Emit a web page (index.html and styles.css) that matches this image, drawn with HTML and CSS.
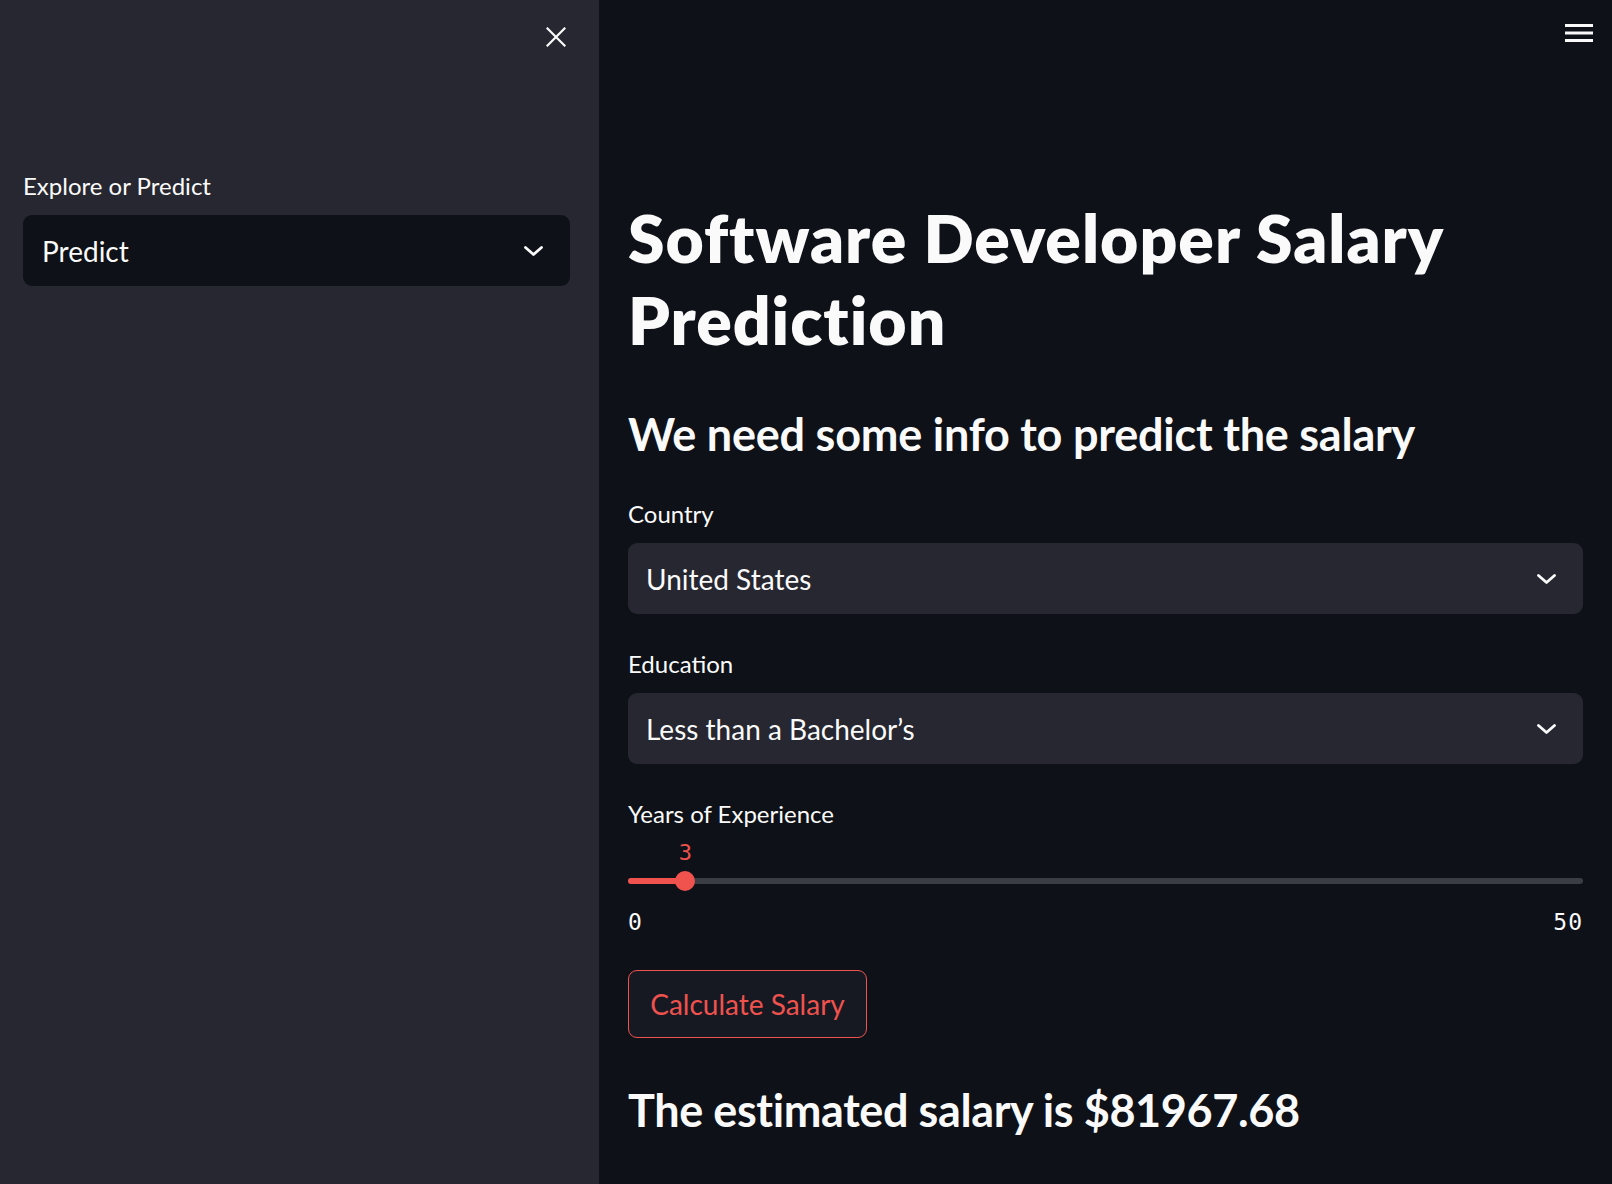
FILE: index.html
```html
<!DOCTYPE html>
<html lang="en">
<head>
<meta charset="utf-8">
<title>Software Developer Salary Prediction</title>
<link rel="stylesheet" href="styles.css">
</head>
<body>
<div class="app">
  <aside class="sidebar">
    <div class="sidebar-top">
      <svg class="close-icon" width="20" height="20" viewBox="0 0 20 20" aria-hidden="true">
        <path d="M1.5 1.5 L18.5 18.5 M18.5 1.5 L1.5 18.5" stroke="#fafafa" stroke-width="2.2" stroke-linecap="square" fill="none"/>
      </svg>
    </div>
    <div class="sidebar-field">
      <div class="field-label">Explore or Predict</div>
      <div class="select select-dark">
        <span class="select-value">Predict</span>
        <svg class="chevron" width="19" height="10" viewBox="0 0 19 10" aria-hidden="true">
          <path d="M1.5 1.5 L9.5 8.5 L17.5 1.5" stroke="#fafafa" stroke-width="2.8" stroke-linecap="round" stroke-linejoin="round" fill="none"/>
        </svg>
      </div>
    </div>
  </aside>
  <main class="main">
    <header class="topbar">
      <svg class="menu-icon" width="28" height="18" viewBox="0 0 28 18" aria-hidden="true">
        <rect x="0" y="0" width="28" height="3" fill="#fafafa"/>
        <rect x="0" y="7.5" width="28" height="3" fill="#fafafa"/>
        <rect x="0" y="15" width="28" height="3" fill="#fafafa"/>
      </svg>
    </header>
    <section class="content">
      <h1 class="title">Software Developer Salary Prediction</h1>
      <h3 class="subtitle">We need some info to predict the salary</h3>

      <div class="field">
        <div class="field-label">Country</div>
        <div class="select">
          <span class="select-value">United States</span>
          <svg class="chevron" width="19" height="10" viewBox="0 0 19 10" aria-hidden="true">
            <path d="M1.5 1.5 L9.5 8.5 L17.5 1.5" stroke="#fafafa" stroke-width="2.8" stroke-linecap="round" stroke-linejoin="round" fill="none"/>
          </svg>
        </div>
      </div>

      <div class="field">
        <div class="field-label">Education</div>
        <div class="select">
          <span class="select-value">Less than a Bachelor’s</span>
          <svg class="chevron" width="19" height="10" viewBox="0 0 19 10" aria-hidden="true">
            <path d="M1.5 1.5 L9.5 8.5 L17.5 1.5" stroke="#fafafa" stroke-width="2.8" stroke-linecap="round" stroke-linejoin="round" fill="none"/>
          </svg>
        </div>
      </div>

      <div class="field">
        <div class="field-label">Years of Experience</div>
        <div class="slider">
          <div class="slider-value-row">
            <span class="slider-value" style="left:6%">3</span>
          </div>
          <div class="slider-track-area">
            <div class="slider-track">
              <div class="slider-fill" style="width:6%"></div>
            </div>
            <div class="slider-thumb" style="left:6%"></div>
          </div>
          <div class="slider-ticks">
            <span>0</span>
            <span>50</span>
          </div>
        </div>
      </div>

      <button class="btn" type="button">Calculate Salary</button>

      <h3 class="result">The estimated salary is $81967.68</h3>
    </section>
  </main>
</div>
</body>
</html>
```

FILE: styles.css
```css
* {
  box-sizing: border-box;
}

html, body {
  margin: 0;
  padding: 0;
  background: #0e1117;
}

body {
  font-family: "Source Sans Pro", "Lato", "Noto Sans", sans-serif;
  color: #fafafa;
}

.app {
  display: flex;
  width: 1612px;
  height: 1184px;
  overflow: hidden;
}

/* Sidebar */
.sidebar {
  width: 599px;
  flex: 0 0 599px;
  background: #262730;
  display: flex;
  flex-direction: column;
  padding: 0 29px 0 23px;
}

.sidebar-top {
  display: flex;
  justify-content: flex-end;
  padding-top: 27px;
  padding-right: 4px;
  height: 47px;
}

.close-icon {
  display: block;
}

.sidebar-field {
  margin-top: 124px;
}

/* Main */
.main {
  flex: 1;
  display: flex;
  flex-direction: column;
  background: #0e1117;
}

.topbar {
  display: flex;
  justify-content: flex-end;
  padding: 24px 19px 0 0;
  height: 42px;
}

.menu-icon {
  display: block;
}

.content {
  padding: 0 29px;
  display: flex;
  flex-direction: column;
  align-items: stretch;
}

.title {
  margin: 155px 0 0 0;
  font-size: 66px;
  font-weight: 800;
  line-height: 82px;
  letter-spacing: 1px;
}

.subtitle {
  margin: 43px 0 0 0;
  font-size: 45px;
  font-weight: 700;
  line-height: 60px;
  letter-spacing: -0.23px;
}

.field {
  margin-top: 35px;
}

.subtitle + .field {
  margin-top: 35px;
}

.field-label {
  font-size: 24px;
  line-height: 30px;
  margin-bottom: 14px;
}

.select {
  height: 71px;
  border-radius: 9px;
  background: #262730;
  display: flex;
  align-items: center;
  justify-content: space-between;
  padding: 0 27px 0 18px;
  font-size: 28px;
}

.select-dark {
  background: #0e1117;
  padding-left: 19px;
}

.chevron {
  display: block;
  flex: 0 0 auto;
}

/* Slider */
.slider {
  margin-top: -1px;
}

.slider-value-row {
  position: relative;
  height: 22px;
}

.slider-value {
  position: absolute;
  top: 0;
  transform: translateX(-50%);
  font-family: "DejaVu Sans Mono", "Liberation Mono", monospace;
  font-size: 22px;
  line-height: 22px;
  color: #f0524e;
}

.slider-track-area {
  position: relative;
  height: 20px;
  margin-top: 7px;
  display: flex;
  align-items: center;
}

.slider-track {
  width: 100%;
  height: 6px;
  border-radius: 3px;
  background: #3a3d44;
  overflow: hidden;
}

.slider-fill {
  height: 100%;
  background: #f0524e;
}

.slider-thumb {
  position: absolute;
  top: 0;
  width: 20px;
  height: 20px;
  margin-left: -10px;
  border-radius: 50%;
  background: #f0524e;
}

.slider-ticks {
  display: flex;
  justify-content: space-between;
  margin-top: 20px;
  font-family: "DejaVu Sans Mono", "Liberation Mono", monospace;
  font-size: 23px;
  line-height: 22px;
  letter-spacing: 1px;
  color: #fafafa;
}

/* Button */
.btn {
  align-self: flex-start;
  margin-top: 37px;
  width: 239px;
  height: 68px;
  border: 1px solid #f0524e;
  border-radius: 9px;
  background: #161922;
  color: #f0524e;
  font-family: "Source Sans Pro", "Lato", "Noto Sans", sans-serif;
  font-size: 28px;
  padding: 0;
}

.result {
  margin: 42px 0 0 0;
  font-size: 45px;
  font-weight: 700;
  line-height: 60px;
  letter-spacing: -0.4px;
}
```
